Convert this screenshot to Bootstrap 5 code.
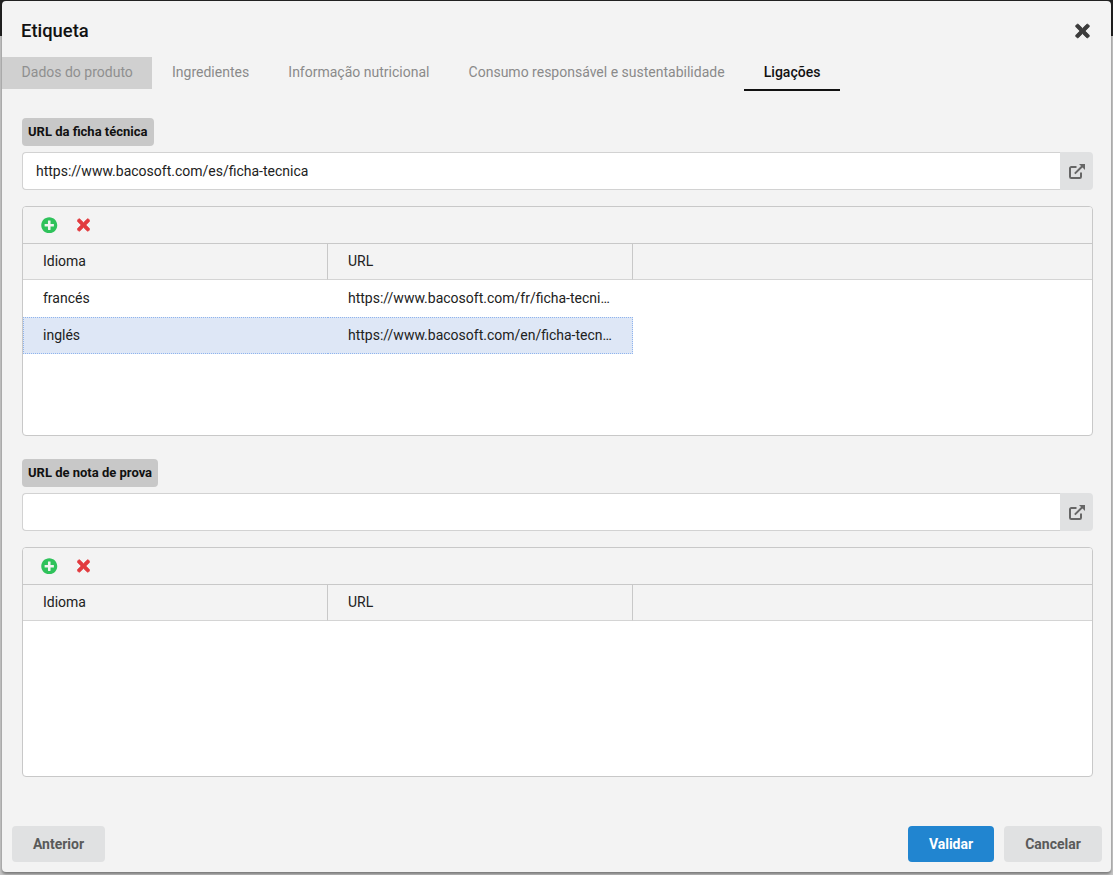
<!DOCTYPE html>
<html lang="pt">
<head>
  <meta charset="UTF-8">
  <title>Etiqueta</title>
  <link href="https://cdn.jsdelivr.net/npm/bootstrap@5.3.0/dist/css/bootstrap.min.css" rel="stylesheet">
  <style>
    html, body { height: 875px; overflow: hidden; }
    body { background: linear-gradient(#222 36px, #c6c6c6 36px); font-family: Roboto, "Liberation Sans", sans-serif; font-size: 14px; color: #212121; }
    .dlg { height: 871px; margin: 1px 2px 3px; background: #f3f3f3; border-radius: 4px; box-shadow: 0 2px 3px rgba(0,0,0,.4); }
    .dlg-head { height: 56px; padding: 4px 21px 0 19px; }
    .dlg-title { font-size: 18.4px; font-weight: 500; color: #111; }
    .tab-bar { height: 34px; }
    .tab-item { padding: 0 19.6px; height: 32px; line-height: 31px; color: #8a8a8a; }
    .tab-item.tab-first { background: #d0d0d0; color: #8f8f8f; }
    .tab-item.tab-on { color: #111; font-weight: 500; border-bottom: 2px solid #111; height: 34px; }
    .dlg-body { padding: 27px 18px 0 20px; }
    .tag-second { margin-top: 23px; }
    .field-tag { height: 28px; line-height: 28px; padding: 0 6px; background: #c8c8c8; border-radius: 4px; font-size: 13px; font-weight: 700; color: #111; }
    .url-box { height: 38px; margin-top: 6px; }
    .url-box .form-control { height: 38px; border: 1px solid #d2d2d2; border-right: 0; border-radius: 4px 0 0 4px; padding: 0 13px; font-size: 14px; color: #212121; box-shadow: none; }
    .url-btn { width: 33px; flex: none; background: #e0e1e2; border-radius: 0 4px 4px 0; }
    .grid-box { height: 230px; margin-top: 16px; border: 1px solid #c8c8c8; border-radius: 4px; overflow: hidden; background: #fff; }
    .grid-tools { height: 37px; padding: 0 0 0 18px; gap: 19px; background: #f3f3f3; border-bottom: 1px solid #c8c8c8; }
    .grid-box .table { table-layout: fixed; margin: 0; font-size: 14px; --bs-table-bg: transparent; border-collapse: separate; border-spacing: 0; }
    .grid-box th, .grid-box td { padding: 0 20px; font-weight: 400; color: #212121; white-space: nowrap; overflow: hidden; text-overflow: ellipsis; border: 0; vertical-align: middle; }
    .grid-box th { height: 36px; background: #f3f3f3; border-bottom: 1px solid #d4d4d4; border-right: 1px solid #c8c8c8; }
    .grid-box th:last-child { border-right: 0; }
    .grid-box td { height: 37px; }
    .grid-box tr.row-on td.cell-data { background: #dee7f6; border-top: 1px dotted #8fb4ee; border-bottom: 1px dotted #8fb4ee; }
    .grid-box tr.row-on td.cell-data:first-child { border-left: 1px dotted #8fb4ee; padding-left: 19px; }
    .grid-box tr.row-on td.cell-next { border-right: 1px dotted #8fb4ee; }
    .col-first { width: 305px; }
    .col-second { width: 305px; }
    .dlg-foot { padding: 0 9px 10px 10px; }
    .foot-gap { gap: 10px; }
    .foot-btn { height: 36px; border: 0; border-radius: 4px; font-size: 14px; font-weight: 700; background: #e0e1e2; color: #5a5a5a; }
    .foot-btn.foot-main { background: #2185d0; color: #fff; }
    .btn-prev { width: 93px; }
    .btn-ok { width: 86px; }
    .btn-no { width: 98px; }
    .icon-heavy { stroke-width: 22px; stroke-linejoin: round; }
  </style>
</head>
<body>
  <div class="dlg d-flex flex-column">
    <!-- Cabecalho -->
    <div class="dlg-head d-flex align-items-center justify-content-between">
      <span class="dlg-title">Etiqueta</span>
      <svg class="icon-heavy" width="15" height="20" viewBox="0 0 352 512" fill="#3c3c3c" stroke="#3c3c3c"><path d="M242.72 256l100.07-100.07c12.28-12.28 12.28-32.19 0-44.48l-22.24-22.24c-12.28-12.28-32.19-12.28-44.48 0L176 189.28 75.93 89.21c-12.28-12.28-32.19-12.28-44.48 0L9.21 111.45c-12.28 12.28-12.28 32.19 0 44.48L109.28 256 9.21 356.07c-12.28 12.28-12.28 32.19 0 44.48l22.24 22.24c12.28 12.28 32.2 12.28 44.48 0L176 322.72l100.07 100.07c12.28 12.28 32.2 12.28 44.48 0l22.24-22.24c12.28-12.28 12.28-32.19 0-44.48L242.72 256z"/></svg>
    </div>

    <!-- Separadores -->
    <div class="tab-bar d-flex align-items-start">
      <div class="tab-item tab-first">Dados do produto</div>
      <div class="tab-item">Ingredientes</div>
      <div class="tab-item">Informação nutricional</div>
      <div class="tab-item">Consumo responsável e sustentabilidade</div>
      <div class="tab-item tab-on">Ligações</div>
    </div>

    <div class="dlg-body flex-grow-1">
      <!-- Ficha tecnica -->
      <div class="d-flex"><span class="field-tag">URL da ficha técnica</span></div>
      <div class="url-box d-flex">
        <input type="text" class="form-control" value="https://www.bacosoft.com/es/ficha-tecnica">
        <div class="url-btn d-flex align-items-center justify-content-center">
          <svg width="16" height="15" viewBox="0 0 16 15" fill="none" stroke="#666" stroke-width="2"><path d="M7.5 3H2.3A1.3 1.3 0 0 0 1 4.3v8.4A1.3 1.3 0 0 0 2.3 14h8.4a1.3 1.3 0 0 0 1.3-1.3V8.5"/><path d="M5.8 9.6 13.5 2"/><path d="M10 0h6v6z" fill="#666" stroke="none"/></svg>
        </div>
      </div>
      <div class="grid-box">
        <div class="grid-tools d-flex align-items-center">
          <svg width="16.5" height="16.5" viewBox="0 0 512 512" fill="#2fc25b"><path d="M256 8C119 8 8 119 8 256s111 248 248 248 248-111 248-248S393 8 256 8zm144 276c0 6.6-5.4 12-12 12h-92v92c0 6.6-5.4 12-12 12h-56c-6.6 0-12-5.4-12-12v-92h-92c-6.6 0-12-5.4-12-12v-56c0-6.6 5.4-12 12-12h92v-92c0-6.6 5.4-12 12-12h56c6.6 0 12 5.4 12 12v92h92c6.6 0 12 5.4 12 12v56z"/></svg>
          <svg class="icon-heavy" width="13" height="18" viewBox="0 0 352 512" fill="#e23b3f" stroke="#e23b3f"><path d="M242.72 256l100.07-100.07c12.28-12.28 12.28-32.19 0-44.48l-22.24-22.24c-12.28-12.28-32.19-12.28-44.48 0L176 189.28 75.93 89.21c-12.28-12.28-32.19-12.28-44.48 0L9.21 111.45c-12.28 12.28-12.28 32.19 0 44.48L109.28 256 9.21 356.07c-12.28 12.28-12.28 32.19 0 44.48l22.24 22.24c12.28 12.28 32.2 12.28 44.48 0L176 322.72l100.07 100.07c12.28 12.28 32.2 12.28 44.48 0l22.24-22.24c12.28-12.28 12.28-32.19 0-44.48L242.72 256z"/></svg>
        </div>
        <table class="table">
          <colgroup><col class="col-first"><col class="col-second"><col></colgroup>
          <thead><tr><th>Idioma</th><th>URL</th><th></th></tr></thead>
          <tbody>
            <tr><td class="cell-data">francés</td><td class="cell-data cell-next">https://www.bacosoft.com/fr/ficha-tecnica</td><td></td></tr>
            <tr class="row-on"><td class="cell-data">inglés</td><td class="cell-data cell-next">https://www.bacosoft.com/en/ficha-tecnica</td><td></td></tr>
          </tbody>
        </table>
      </div>

      <!-- Nota de prova -->
      <div class="d-flex tag-second"><span class="field-tag">URL de nota de prova</span></div>
      <div class="url-box d-flex">
        <input type="text" class="form-control" value="">
        <div class="url-btn d-flex align-items-center justify-content-center">
          <svg width="16" height="15" viewBox="0 0 16 15" fill="none" stroke="#666" stroke-width="2"><path d="M7.5 3H2.3A1.3 1.3 0 0 0 1 4.3v8.4A1.3 1.3 0 0 0 2.3 14h8.4a1.3 1.3 0 0 0 1.3-1.3V8.5"/><path d="M5.8 9.6 13.5 2"/><path d="M10 0h6v6z" fill="#666" stroke="none"/></svg>
        </div>
      </div>
      <div class="grid-box">
        <div class="grid-tools d-flex align-items-center">
          <svg width="16.5" height="16.5" viewBox="0 0 512 512" fill="#2fc25b"><path d="M256 8C119 8 8 119 8 256s111 248 248 248 248-111 248-248S393 8 256 8zm144 276c0 6.6-5.4 12-12 12h-92v92c0 6.6-5.4 12-12 12h-56c-6.6 0-12-5.4-12-12v-92h-92c-6.6 0-12-5.4-12-12v-56c0-6.6 5.4-12 12-12h92v-92c0-6.6 5.4-12 12-12h56c6.6 0 12 5.4 12 12v92h92c6.6 0 12 5.4 12 12v56z"/></svg>
          <svg class="icon-heavy" width="13" height="18" viewBox="0 0 352 512" fill="#e23b3f" stroke="#e23b3f"><path d="M242.72 256l100.07-100.07c12.28-12.28 12.28-32.19 0-44.48l-22.24-22.24c-12.28-12.28-32.19-12.28-44.48 0L176 189.28 75.93 89.21c-12.28-12.28-32.19-12.28-44.48 0L9.21 111.45c-12.28 12.28-12.28 32.19 0 44.48L109.28 256 9.21 356.07c-12.28 12.28-12.28 32.19 0 44.48l22.24 22.24c12.28 12.28 32.2 12.28 44.48 0L176 322.72l100.07 100.07c12.28 12.28 32.2 12.28 44.48 0l22.24-22.24c12.28-12.28 12.28-32.19 0-44.48L242.72 256z"/></svg>
        </div>
        <table class="table">
          <colgroup><col class="col-first"><col class="col-second"><col></colgroup>
          <thead><tr><th>Idioma</th><th>URL</th><th></th></tr></thead>
        </table>
      </div>
    </div>

    <!-- Rodape -->
    <div class="dlg-foot d-flex justify-content-between">
      <button type="button" class="btn foot-btn btn-prev">Anterior</button>
      <div class="d-flex foot-gap">
        <button type="button" class="btn foot-btn foot-main btn-ok">Validar</button>
        <button type="button" class="btn foot-btn btn-no">Cancelar</button>
      </div>
    </div>
  </div>
  <script src="https://cdn.jsdelivr.net/npm/bootstrap@5.3.0/dist/js/bootstrap.bundle.min.js"></script>
</body>
</html>
